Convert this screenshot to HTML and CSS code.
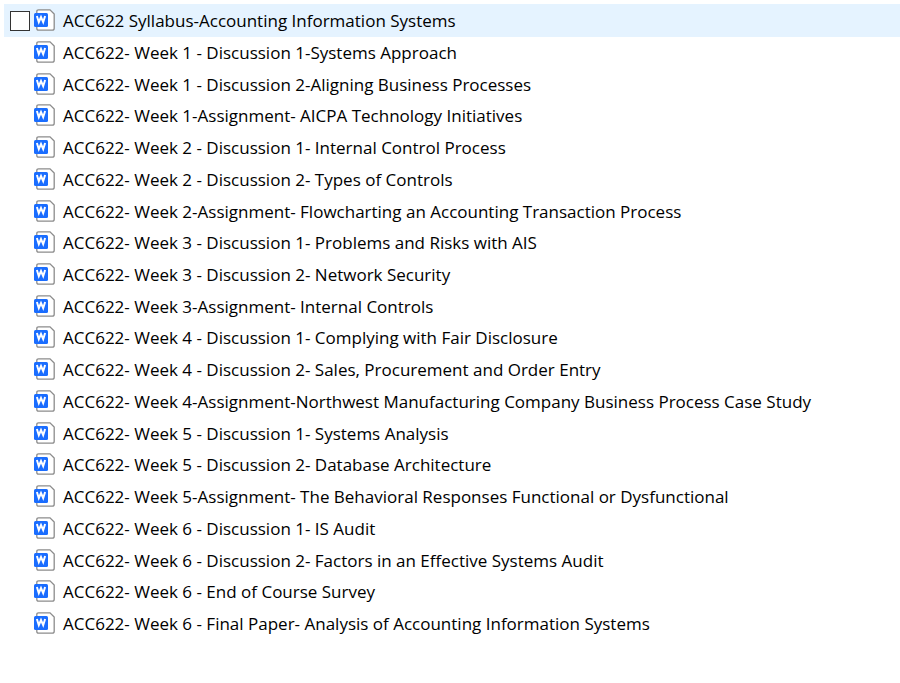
FILE: index.html
```html
<!DOCTYPE html>
<html lang="en">
<head>
    <meta charset="utf-8">
    <title>ACC622</title>
    <link rel="stylesheet" href="styles.css">
</head>
<body>
    <svg class="sprite" aria-hidden="true">
        <symbol id="word" viewBox="0 0 21 22">
            <path d="M4.5 .8H16L20.2 5V19.2Q20.2 21.2 18.2 21.2H4.5Q2.8 21.2 2.8 19.5V2.5Q2.8 .8 4.5 .8Z" fill="#fff" stroke="#8c8c8c" stroke-width="1.3"/>
            <rect x="0" y="4" width="14" height="14" rx="1.5" fill="#1a6dff"/>
            <path d="M2.9 7L4.8 13.2L7 8L9.2 13.2L11.1 7" fill="none" stroke="#fff" stroke-width="2"/>
        </symbol>
    </svg>
    <ul class="fileList">
        <li class="file selected"><input type="checkbox" class="check" id="syllabus"><svg class="icon"><use href="#word"/></svg><label class="name" for="syllabus">ACC622 Syllabus-Accounting Information Systems</label></li>
        <li class="file"><svg class="icon"><use href="#word"/></svg><span class="name">ACC622- Week 1 - Discussion 1-Systems Approach</span></li>
        <li class="file"><svg class="icon"><use href="#word"/></svg><span class="name">ACC622- Week 1 - Discussion 2-Aligning Business Processes</span></li>
        <li class="file"><svg class="icon"><use href="#word"/></svg><span class="name">ACC622- Week 1-Assignment- AICPA Technology Initiatives</span></li>
        <li class="file"><svg class="icon"><use href="#word"/></svg><span class="name">ACC622- Week 2 - Discussion 1- Internal Control Process</span></li>
        <li class="file"><svg class="icon"><use href="#word"/></svg><span class="name">ACC622- Week 2 - Discussion 2- Types of Controls</span></li>
        <li class="file"><svg class="icon"><use href="#word"/></svg><span class="name">ACC622- Week 2-Assignment- Flowcharting an Accounting Transaction Process</span></li>
        <li class="file"><svg class="icon"><use href="#word"/></svg><span class="name">ACC622- Week 3 - Discussion 1- Problems and Risks with AIS</span></li>
        <li class="file"><svg class="icon"><use href="#word"/></svg><span class="name">ACC622- Week 3 - Discussion 2- Network Security</span></li>
        <li class="file"><svg class="icon"><use href="#word"/></svg><span class="name">ACC622- Week 3-Assignment- Internal Controls</span></li>
        <li class="file"><svg class="icon"><use href="#word"/></svg><span class="name">ACC622- Week 4 - Discussion 1- Complying with Fair Disclosure</span></li>
        <li class="file"><svg class="icon"><use href="#word"/></svg><span class="name">ACC622- Week 4 - Discussion 2- Sales, Procurement and Order Entry</span></li>
        <li class="file"><svg class="icon"><use href="#word"/></svg><span class="name">ACC622- Week 4-Assignment-Northwest Manufacturing Company Business Process Case Study</span></li>
        <li class="file"><svg class="icon"><use href="#word"/></svg><span class="name">ACC622- Week 5 - Discussion 1- Systems Analysis</span></li>
        <li class="file"><svg class="icon"><use href="#word"/></svg><span class="name">ACC622- Week 5 - Discussion 2- Database Architecture</span></li>
        <li class="file"><svg class="icon"><use href="#word"/></svg><span class="name">ACC622- Week 5-Assignment- The Behavioral Responses Functional or Dysfunctional</span></li>
        <li class="file"><svg class="icon"><use href="#word"/></svg><span class="name">ACC622- Week 6 - Discussion 1- IS Audit</span></li>
        <li class="file"><svg class="icon"><use href="#word"/></svg><span class="name">ACC622- Week 6 - Discussion 2- Factors in an Effective Systems Audit</span></li>
        <li class="file"><svg class="icon"><use href="#word"/></svg><span class="name">ACC622- Week 6 - End of Course Survey</span></li>
        <li class="file"><svg class="icon"><use href="#word"/></svg><span class="name">ACC622- Week 6 - Final Paper- Analysis of Accounting Information Systems</span></li>
    </ul>
</body>
</html>
```
FILE: styles.css
```css
body {
    margin: 0;
    background-color: #fff;
    color: #000;
    font-family: "Open Sans", "Noto Sans", sans-serif;
    font-size: 17px;
    line-height: 24px;
}

.sprite {
    display: none;
}

.fileList {
    display: grid;
    grid-template-rows: 33px;
    grid-auto-rows: 1fr;
    box-sizing: border-box;
    min-height: 640px;
    margin: 0;
    padding: 4px 0 0 4px;
    list-style: none;
}

/* checkbox, icon, name */
.file {
    display: grid;
    grid-template-columns: 24px 21px 1fr;
    align-items: center;
    padding-left: 6px;
}

.selected {
    background-color: #e5f3ff;
}

.check {
    appearance: none;
    box-sizing: border-box;
    width: 20px;
    height: 20px;
    margin: 0;
    border: 1px solid #333;
    background-color: #fff;
}

.check:checked {
    background-color: #1a6dff;
}

.icon {
    grid-column: 2;
    width: 21px;
    height: 22px;
    margin-bottom: 2px;
}

.name {
    padding-left: 8px;
}
```
